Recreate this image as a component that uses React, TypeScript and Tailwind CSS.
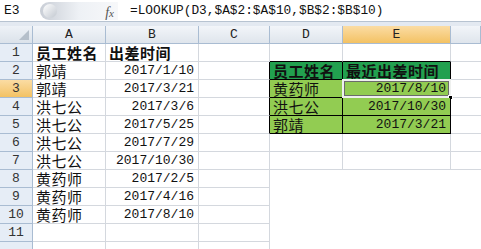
import React from 'react'

const GRID = 'border-[#d4d8de]'
const HEAD_LINE = 'border-[#a9bcd2]'

const cjk = { fontFamily: '"Noto Sans CJK SC", "Noto Sans", sans-serif' }
const mono = { fontFamily: '"Liberation Mono", "DejaVu Sans Mono", monospace' }

type Row = {
  n: number
  a?: string
  b?: string
  d?: string
  e?: string
  bold?: boolean
}

const rows: Row[] = [
  { n: 1, a: '员工姓名', b: '出差时间', bold: true },
  { n: 2, a: '郭靖', b: '2017/1/10', d: '员工姓名', e: '最近出差时间' },
  { n: 3, a: '郭靖', b: '2017/3/21', d: '黄药师', e: '2017/8/10' },
  { n: 4, a: '洪七公', b: '2017/3/6', d: '洪七公', e: '2017/10/30' },
  { n: 5, a: '洪七公', b: '2017/5/25', d: '郭靖', e: '2017/3/21' },
  { n: 6, a: '洪七公', b: '2017/7/29' },
  { n: 7, a: '洪七公', b: '2017/10/30' },
  { n: 8, a: '黄药师', b: '2017/2/5' },
  { n: 9, a: '黄药师', b: '2017/4/16' },
  { n: 10, a: '黄药师', b: '2017/8/10' },
  { n: 11 },
  { n: 12 },
]

function NameText({ text, bold }: { text?: string; bold?: boolean }) {
  if (!text) return null
  return (
    <span
      style={cjk}
      className={`whitespace-nowrap pl-[3px] text-[15px] leading-[17px] tracking-[0.5px] text-[#111] ${bold ? 'font-bold' : ''}`}
    >
      {text}
    </span>
  )
}

function DateText({ text }: { text?: string }) {
  if (!text) return null
  return (
    <span style={mono} className="ml-auto whitespace-nowrap pr-[4px] text-[13px] leading-[17px] text-[#111]">
      {text}
    </span>
  )
}

export default function App() {
  return (
    <div className="relative h-[249px] w-[481px] overflow-hidden bg-white">
      {/* formula bar */}
      <div className="flex h-[22px] items-center border-b border-[#b7c3d1] bg-white">
        <div style={mono} className="w-[38px] pl-[4px] text-[13px] text-[#111]">
          E3
        </div>
        <div className="relative ml-[2px] flex h-[18px] w-[78px] items-center rounded-l-full bg-gradient-to-r from-[#c9ced6] via-[#eef1f5] to-[#f7f8fa]">
          <div className="ml-[3px] h-[14px] w-[14px] rounded-full bg-gradient-to-br from-white to-[#c2c8d0]" />
          <span
            style={{ fontFamily: '"Liberation Serif", serif' }}
            className="absolute right-[4px] top-[0px] text-[14px] italic text-[#555]"
          >
            f<span className="text-[11px]">x</span>
          </span>
        </div>
        <div style={mono} className="pl-[12px] text-[12.8px] text-[#111]">
          =LOOKUP(D3,$A$2:$A$10,$B$2:$B$10)
        </div>
      </div>
      <div className="h-[4px] bg-[#e3e9f1]" />

      {/* sheet */}
      <div className="grid grid-cols-[33px_73px_93px_71px_73px_108px_30px] auto-rows-[18px]">
        {/* column headers */}
        <div className={`relative border-r border-b ${HEAD_LINE} bg-gradient-to-b from-[#eef2f7] to-[#dbe2ea]`}>
          <div className="absolute bottom-[3px] right-[3px] h-0 w-0 border-l-[10px] border-t-[10px] border-l-transparent border-t-transparent border-b-0 border-r-[10px] border-r-[#b5bfca]" />
        </div>
        {['A', 'B', 'C', 'D', 'E', ''].map((c) => (
          <div
            key={c || 'F'}
            style={mono}
            className={`flex items-center justify-center border-r border-b ${HEAD_LINE} text-[13px] text-[#222] ${
              c === 'E'
                ? 'bg-gradient-to-b from-[#fbdca3] to-[#f3c262]'
                : 'bg-gradient-to-b from-[#f2f5f9] to-[#dfe5ec]'
            }`}
          >
            {c}
          </div>
        ))}

        {rows.map((r) => {
          const inTable = r.n >= 2 && r.n <= 5
          const blank = r.n >= 8
          const isHead = r.n === 2
          const tableBg = isHead ? 'bg-[#22a04f]' : 'bg-[#92cc52]'
          return (
            <React.Fragment key={r.n}>
              <div
                style={mono}
                className={`flex items-center justify-center border-r border-b ${HEAD_LINE} text-[13px] leading-[17px] text-[#333] ${
                  r.n === 3 ? 'bg-gradient-to-b from-[#fbdca3] to-[#f3c262]' : 'bg-[#e6edf6]'
                }`}
              >
                {r.n < 12 ? r.n : ''}
              </div>
              <div className={`flex items-center border-r border-b ${GRID}`}>
                <NameText text={r.a} bold={r.bold} />
              </div>
              <div className={`flex items-center border-r border-b ${GRID}`}>
                {r.bold ? <NameText text={r.b} bold /> : <DateText text={r.b} />}
              </div>
              <div className={`border-b ${GRID} border-r ${inTable ? 'border-r-black' : ''}`} />
              {inTable ? (
                <>
                  <div className={`flex items-center border-r border-b border-black ${tableBg}`}>
                    <NameText text={r.d} bold={isHead} />
                  </div>
                  <div className={`relative flex items-center border-r border-b border-black ${tableBg}`}>
                    {isHead ? <NameText text={r.e} bold /> : <DateText text={r.e} />}
                    {r.n === 3 && (
                      <div className="absolute -left-[1px] -top-[1px] h-[19px] w-[109px] border-2 border-[#eef0ee] shadow-[inset_0_0_0_1px_#6b6b6b]">
                        <div className="absolute -bottom-[4px] -right-[4px] h-[5px] w-[5px] border border-white bg-black" />
                      </div>
                    )}
                  </div>
                </>
              ) : (
                <>
                  <div className={blank ? '' : `border-r border-b ${GRID} ${r.n === 1 ? 'border-b-black' : ''}`} />
                  <div className={blank ? '' : `border-r border-b ${GRID} ${r.n === 1 ? 'border-b-black' : ''}`} />
                </>
              )}
              <div className={blank ? '' : `border-b ${GRID}`} />
            </React.Fragment>
          )
        })}
      </div>
    </div>
  )
}
